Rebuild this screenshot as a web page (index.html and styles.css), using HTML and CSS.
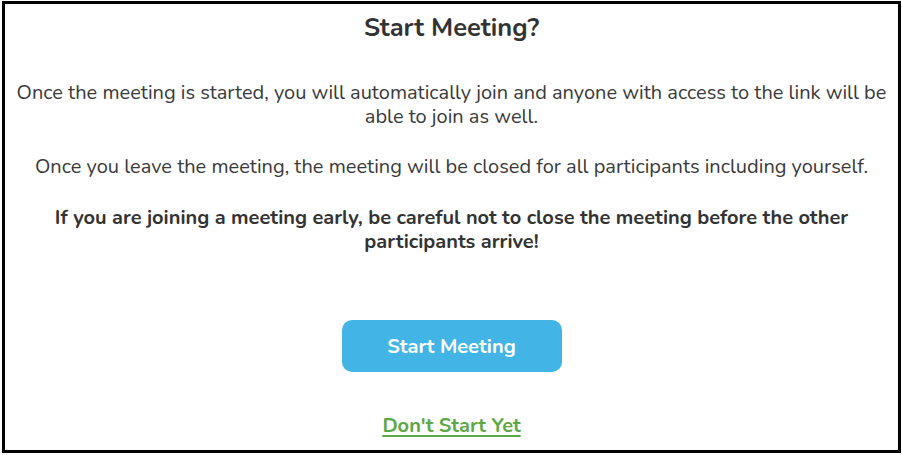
FILE: index.html
```html
<!DOCTYPE html>
<html lang="en">
<head>
<meta charset="utf-8">
<title>Start Meeting?</title>
<link rel="stylesheet" href="styles.css">
</head>
<body>
<div class="dialog">
  <h1 class="title">Start Meeting?</h1>
  <p class="text first">Once the meeting is started, you will automatically join and anyone with access to the link will be able to join as well.</p>
  <p class="text">Once you leave the meeting, the meeting will be closed for all participants including yourself.</p>
  <p class="text strong">If you are joining a meeting early, be careful not to close the meeting before the other participants arrive!</p>
  <button class="start-btn" type="button">Start Meeting</button>
  <a class="later" href="#">Don't Start Yet</a>
</div>
</body>
</html>
```

FILE: styles.css
```css
html, body {
  margin: 0;
  padding: 0;
  background: #ffffff;
}

body {
  font-family: "Nunito", "Lato", "Open Sans", sans-serif;
  color: #333333;
}

.dialog {
  box-sizing: border-box;
  width: 899px;
  height: 452px;
  margin: 1px 0 0 2px;
  border: 3px solid #000000;
  padding: 0 10px;
  display: flex;
  flex-direction: column;
  align-items: center;
  text-align: center;
}

.title {
  margin: 9px 0 0;
  font-size: 25.5px;
  line-height: 30px;
  font-weight: 700;
  color: #333333;
}

.text {
  margin: 26px 0 0;
  font-size: 20px;
  line-height: 24px;
  font-weight: 400;
  color: #3a3a3a;
}

.text.first {
  margin-top: 38px;
}

.text.strong {
  margin-top: 27px;
  font-weight: 700;
  color: #333333;
}

.start-btn {
  margin-top: 66px;
  width: 220px;
  height: 52px;
  border: none;
  border-radius: 10px;
  background: #42b5e6;
  color: #ffffff;
  font-family: inherit;
  font-size: 20px;
  font-weight: 700;
  cursor: pointer;
}

.later {
  margin-top: 42px;
  font-size: 20px;
  line-height: 24px;
  font-weight: 700;
  color: #5ba844;
  text-decoration: underline;
  text-decoration-thickness: 2px;
  text-underline-offset: 3px;
}
```
